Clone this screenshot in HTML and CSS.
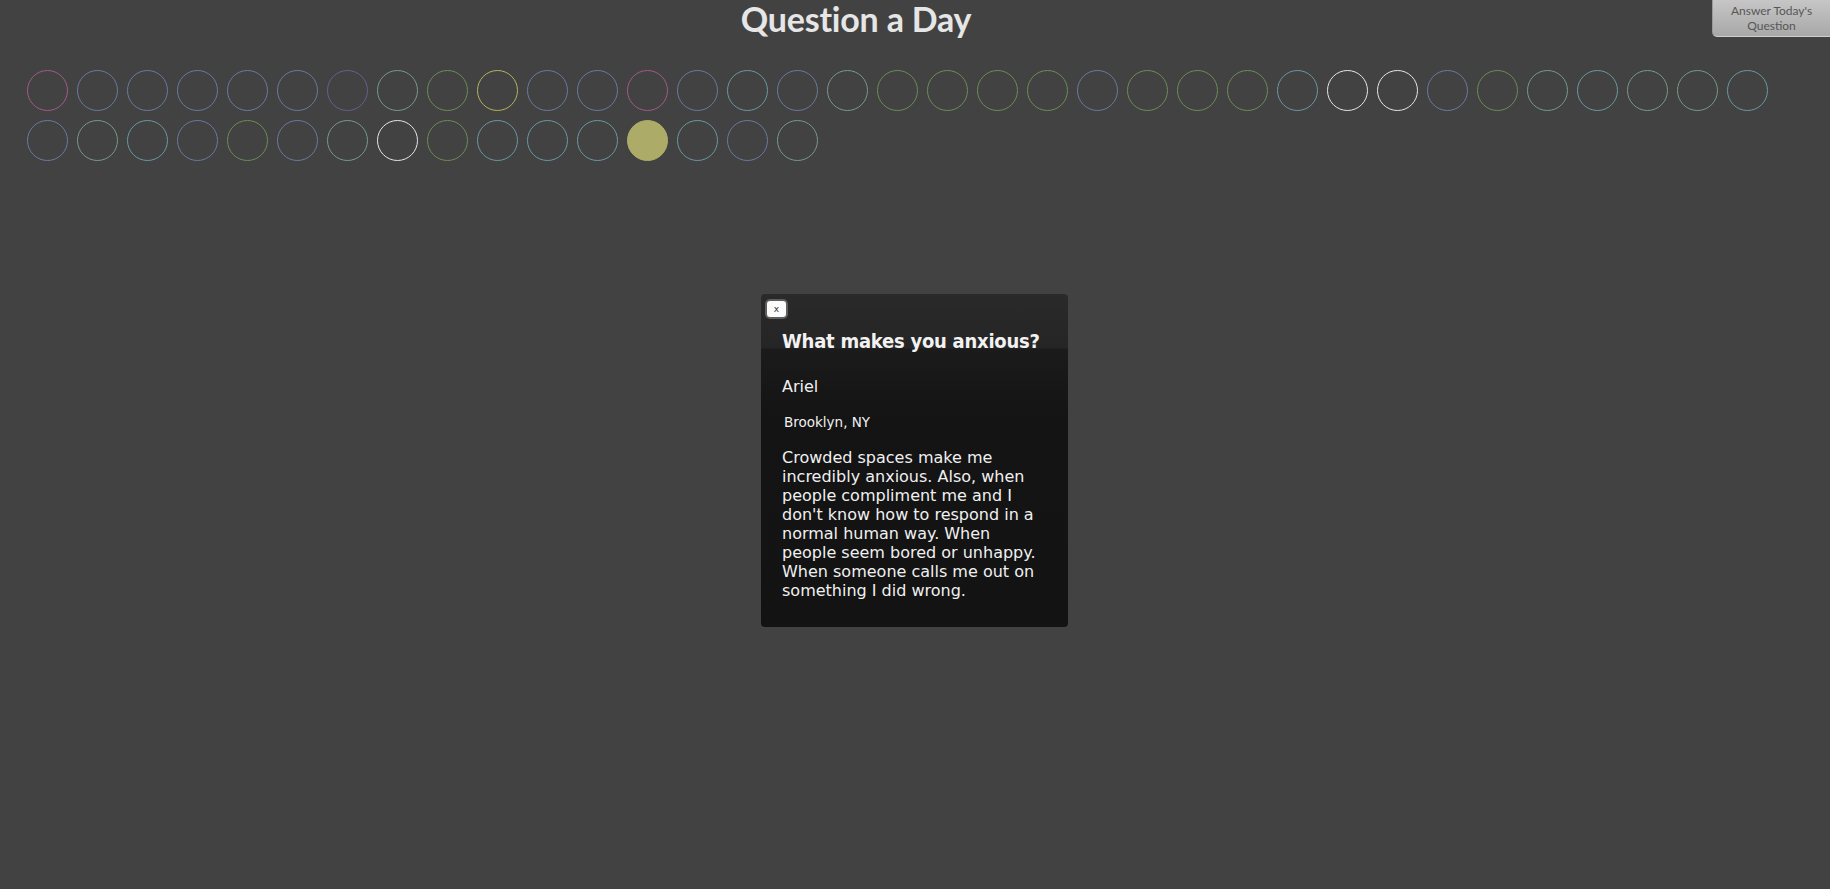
FILE: index.html
```html
<!DOCTYPE html>
<html lang="en">
<head>
<meta charset="utf-8">
<title>Question a Day</title>
<link rel="stylesheet" href="styles.css">
</head>
<body>
<header class="top">
  <h1 class="site-title">Question a Day</h1>
  <a class="answer-btn" href="#">Answer Today's<br>Question</a>
</header>

<main class="days">
  <span class="day pink"></span><span class="day slate"></span><span class="day slate"></span><span class="day slate"></span><span class="day slate"></span><span class="day slate"></span><span class="day purple"></span><span class="day sage"></span><span class="day green"></span><span class="day yellow"></span><span class="day slate"></span><span class="day slate"></span><span class="day pink"></span><span class="day slate"></span><span class="day teal"></span><span class="day slate"></span><span class="day sage"></span><span class="day green"></span><span class="day green"></span><span class="day green"></span><span class="day green"></span><span class="day slate"></span><span class="day green"></span><span class="day green"></span><span class="day green"></span><span class="day teal"></span><span class="day white"></span><span class="day white"></span><span class="day slate"></span><span class="day green"></span><span class="day sage"></span><span class="day teal"></span><span class="day sage"></span><span class="day sage"></span><span class="day teal"></span>
  <span class="day slate"></span><span class="day sage"></span><span class="day teal"></span><span class="day slate"></span><span class="day green"></span><span class="day slate"></span><span class="day sage"></span><span class="day white"></span><span class="day green"></span><span class="day teal"></span><span class="day teal"></span><span class="day teal"></span><span class="day filled"></span><span class="day teal"></span><span class="day slate"></span><span class="day sage"></span>
</main>

<div class="modal">
  <button class="close-btn" type="button">x</button>
  <h2 class="question">What makes you anxious?</h2>
  <p class="name">Ariel</p>
  <p class="place">Brooklyn, NY</p>
  <p class="answer">Crowded spaces make me incredibly anxious. Also, when people compliment me and I don't know how to respond in a normal human way. When people seem bored or unhappy. When someone calls me out on something I did wrong.</p>
</div>
</body>
</html>
```

FILE: styles.css
```css
html, body {
  margin: 0;
  padding: 0;
}

body {
  background: #424242;
  min-height: 889px;
  font-family: "DejaVu Sans", Verdana, sans-serif;
}

.top {
  display: flex;
  align-items: flex-start;
  height: 37px;
}

.site-title {
  flex: 1;
  margin: 0;
  text-align: center;
  font-family: Lato, "Open Sans", sans-serif;
  font-weight: 700;
  font-size: 34px;
  line-height: 37px;
  color: #e6e6e6;
  letter-spacing: -0.2px;
}

.answer-btn {
  box-sizing: border-box;
  width: 118px;
  height: 37px;
  padding: 4px 0 0;
  text-align: center;
  font-family: Lato, "Open Sans", sans-serif;
  font-size: 12px;
  line-height: 14.5px;
  color: #575757;
  text-decoration: none;
  background: linear-gradient(to bottom, #c6c6c6 0%, #b4b4b4 60%, #a8a8a8 100%);
  border-left: 1px solid #9a9a9a;
  border-bottom: 1px solid #cfcfcf;
  border-bottom-left-radius: 5px;
}

.days {
  display: flex;
  flex-wrap: wrap;
  gap: 9px;
  width: 1741px;
  margin: 33px 0 0 26.5px;
}

.day {
  box-sizing: border-box;
  width: 41px;
  height: 41px;
  border-radius: 50%;
  border: 1.7px solid #6b7ba0;
}

.day.pink   { border-color: #a35a87; }
.day.slate  { border-color: #6a7a9f; }
.day.purple { border-color: #6c5c8f; }
.day.sage   { border-color: #789a88; }
.day.green  { border-color: #6a8d56; }
.day.yellow { border-color: #b4b45e; }
.day.teal   { border-color: #6a98a2; }
.day.white  { border-color: #e6e6e6; }
.day.filled { border-color: #acac68; background: #acac68; }

.modal {
  position: absolute;
  top: 294px;
  left: 761px;
  box-sizing: border-box;
  width: 307px;
  padding: 5px 21px 27px;
  border-radius: 4px;
  background: linear-gradient(to bottom, #2a2a2a 0px, #252525 54px, #1b1b1b 55px, #141414 120px, #131313 100%);
  color: #f0f0f0;
}

.close-btn {
  display: block;
  box-sizing: border-box;
  width: 23px;
  height: 20px;
  margin: 0 0 0 -17px;
  padding: 0;
  border: 2.5px solid #5e5e5e;
  border-radius: 5px;
  background: #fbfbfb;
  color: #333;
  font-family: "DejaVu Sans", sans-serif;
  font-size: 9px;
  line-height: 13px;
  text-align: center;
}

.question {
  margin: 10px 0 0;
  font-family: "DejaVu Sans Condensed", "DejaVu Sans", sans-serif;
  font-weight: 700;
  font-size: 20px;
  line-height: 24px;
  letter-spacing: -0.25px;
  white-space: nowrap;
  color: #f2f2f2;
}

.name {
  margin: 24px 0 0;
  font-size: 16px;
  line-height: 19px;
}

.place {
  margin: 18px 0 0 2px;
  font-size: 13.5px;
  line-height: 16px;
}

.answer {
  margin: 18px 0 0;
  font-size: 16px;
  line-height: 19px;
  color: #f0f0f0;
}
```
